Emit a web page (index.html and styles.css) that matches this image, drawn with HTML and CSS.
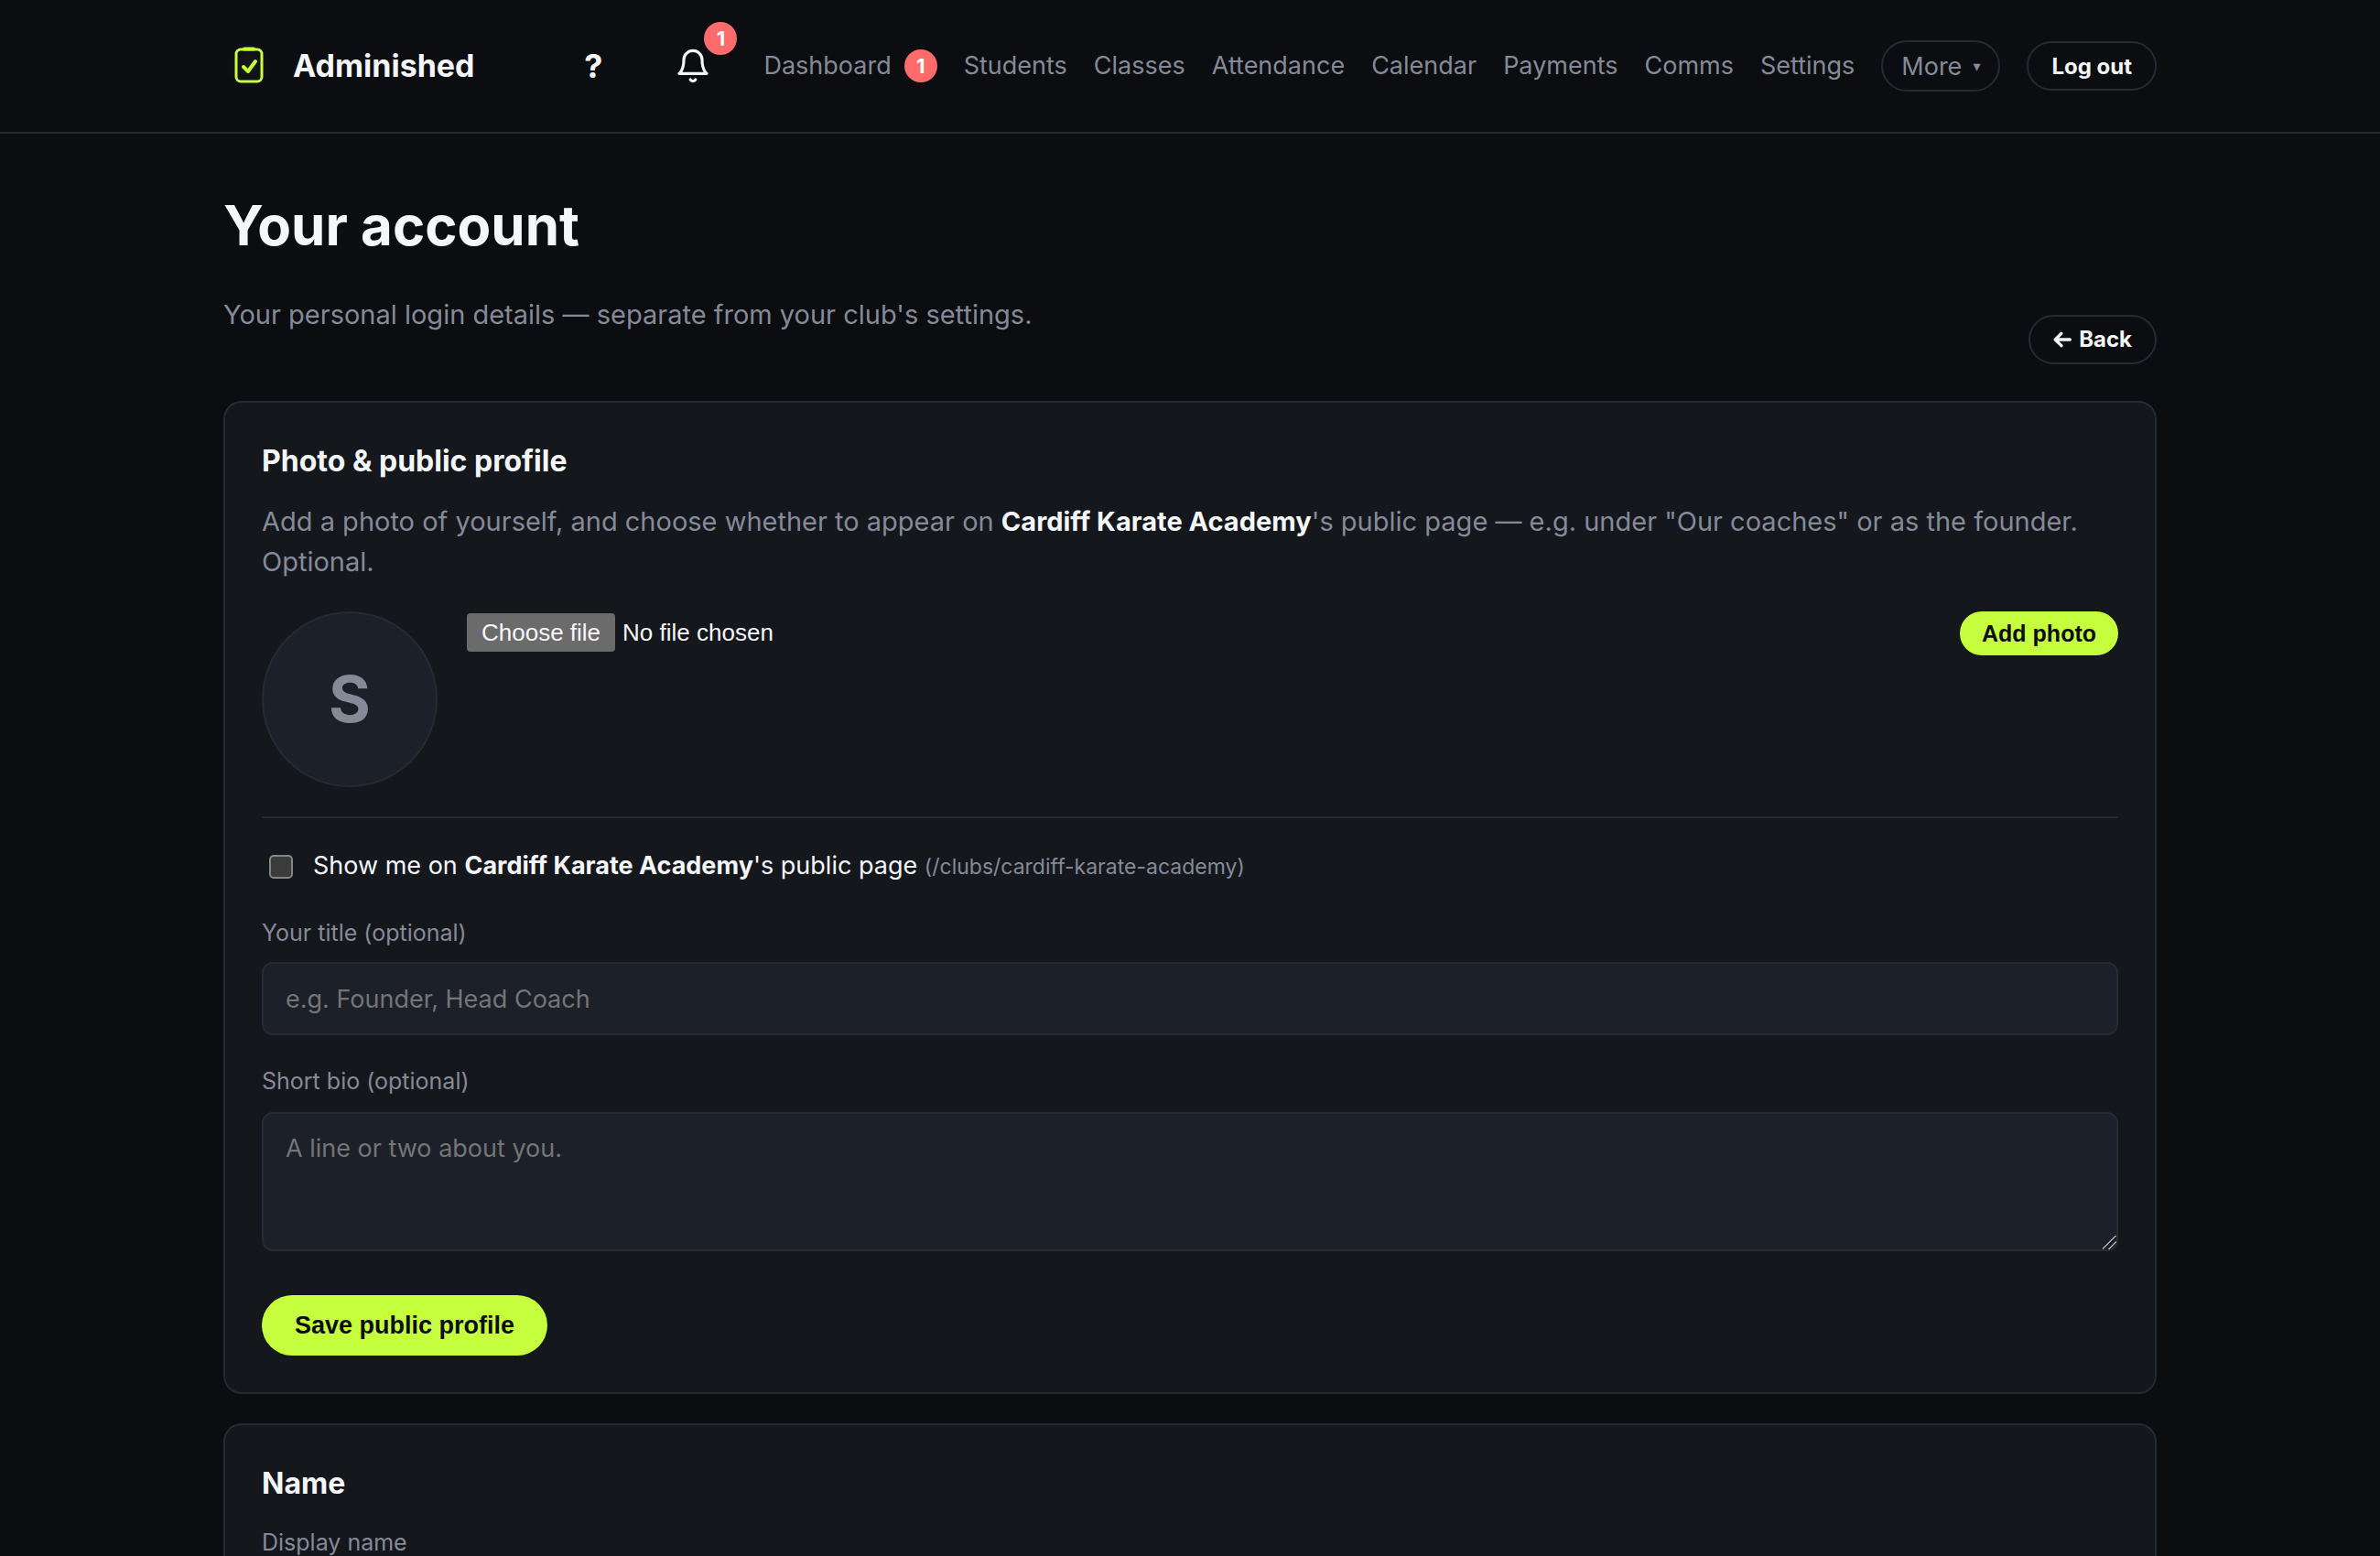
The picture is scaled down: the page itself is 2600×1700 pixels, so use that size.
FILE: index.html
```html
<!DOCTYPE html>
<html lang="en">
<head>
  <meta charset="UTF-8">
  <meta name="viewport" content="width=device-width, initial-scale=1">
  <title>Your account - Adminished</title>
  <link rel="stylesheet" href="styles.css">
</head>
<body>
  <header class="site-header">
    <div class="container header-inner">
      <a href="#" class="brand">
        <svg class="brand-mark" viewBox="0 0 56 56" fill="none" stroke="currentColor" stroke-width="3" stroke-linecap="round" stroke-linejoin="round" aria-hidden="true">
          <rect x="14" y="10" width="28" height="35" rx="5"/>
          <path d="M23 9.500h10" stroke-width="4"/>
          <path d="M22 29l5 5 8-11" stroke-width="4"/>
        </svg>
        <span>Adminished</span>
      </a>

      <nav class="nav">
        <button type="button" class="help" aria-label="Help">?</button>
        <button type="button" class="bell" aria-label="Notifications">
          <svg viewBox="0 0 24 24" width="40" height="40" fill="none" stroke="currentColor" stroke-width="1.900" stroke-linecap="round" stroke-linejoin="round" aria-hidden="true">
            <path d="M18 8A6 6 0 0 0 6 8c0 7-3 9-3 9h18s-3-2-3-9"/>
            <path d="M13.730 21a2 2 0 0 1-3.460 0"/>
          </svg>
          <span class="badge bell-badge">1</span>
        </button>
        <a href="#">Dashboard <span class="badge">1</span></a>
        <a href="#">Students</a>
        <a href="#">Classes</a>
        <a href="#">Attendance</a>
        <a href="#">Calendar</a>
        <a href="#">Payments</a>
        <a href="#">Comms</a>
        <a href="#">Settings</a>
        <button type="button" class="more">More <span class="caret">▾</span></button>
        <button type="button" class="btn-ghost">Log out</button>
      </nav>
    </div>
  </header>

  <main class="container">
    <div class="page-head">
      <div>
        <h1>Your account</h1>
        <p class="muted">Your personal login details — separate from your club's settings.</p>
      </div>
      <a href="#" class="btn-ghost">
        <svg class="arrow" viewBox="0 0 18 18" fill="none" stroke="currentColor" stroke-width="3" stroke-linecap="round" stroke-linejoin="round" aria-hidden="true">
          <path d="M16.500 9H2M8 3L2 9l6 6"/>
        </svg>
        Back
      </a>
    </div>

    <section class="card">
      <h2>Photo &amp; public profile</h2>
      <p class="muted">Add a photo of yourself, and choose whether to appear on <strong>Cardiff Karate Academy</strong>'s public page — e.g. under "Our coaches" or as the founder. Optional.</p>

      <form class="photo-row">
        <div class="avatar">S</div>
        <div class="file">
          <label for="photo" class="file-btn">Choose file</label>
          <span>No file chosen</span>
          <input type="file" class="file-input" id="photo">
        </div>
        <button type="submit" class="btn btn-small">Add photo</button>
      </form>

      <form class="profile-form">
        <label class="check">
          <input type="checkbox">
          <span>Show me on <strong>Cardiff Karate Academy</strong>'s public page <small>(/clubs/cardiff-karate-academy)</small></span>
        </label>

        <label class="field-label" for="title">Your title (optional)</label>
        <input type="text" class="field" id="title" placeholder="e.g. Founder, Head Coach">

        <label class="field-label" for="bio">Short bio (optional)</label>
        <textarea class="field" id="bio" placeholder="A line or two about you."></textarea>

        <button type="submit" class="btn">Save public profile</button>
      </form>
    </section>

    <section class="card">
      <h2>Name</h2>
      <label class="field-label" for="name">Display name</label>
      <input type="text" class="field" id="name">
    </section>
  </main>
</body>
</html>
```
FILE: styles.css
```css
:root {
  --bg: #0b0d10;
  --card: #14171c;
  --field: #1c2029;
  --line: #262a33;
  --text: #f5f6fa;
  --muted: #858a98;
  --accent: #c6ff3d;
  --red: #ff6b6b;
}

* { box-sizing: border-box; }

body {
  margin: 0;
  background: var(--bg);
  color: var(--text);
  font-family: Inter, "Liberation Sans", sans-serif;
  font-size: 29px;
  line-height: 44px;
}

a { color: inherit; text-decoration: none; }
button { font-family: inherit; cursor: pointer; }

.container {
  max-width: 2200px;
  margin: 0 auto;
  padding: 0 44px;
}

/* header */
.site-header { border-bottom: 2px solid var(--line); }

.header-inner {
  display: flex;
  align-items: center;
  justify-content: space-between;
  min-height: 144px;
}

.brand {
  display: flex;
  align-items: center;
  gap: 20px;
  font-size: 34px;
  font-weight: 700;
}

.brand-mark {
  width: 56px;
  height: 56px;
  color: var(--accent);
  background: radial-gradient(circle, #14191c, var(--bg) 70%);
}

.nav {
  display: flex;
  align-items: center;
  gap: 29px;
  font-size: 27px;
  color: var(--muted);
}

.nav a { display: flex; align-items: center; gap: 14px; }

.help, .bell {
  background: none;
  border: none;
  padding: 0;
  color: var(--text);
}

.help { width: 64px; font-size: 36px; font-weight: 700; }
.bell { position: relative; width: 96px; height: 96px; display: flex; align-items: center; justify-content: center; }

.badge {
  display: inline-block;
  min-width: 36px;
  height: 36px;
  border-radius: 18px;
  background: var(--red);
  color: #fff;
  font-size: 22px;
  font-weight: 700;
  line-height: 36px;
  text-align: center;
}

.bell-badge { position: absolute; top: 0; right: 0; }

.more {
  display: flex;
  align-items: center;
  gap: 12px;
  height: 56px;
  padding: 0 20px;
  background: none;
  border: 2px solid var(--line);
  border-radius: 28px;
  color: inherit;
  font-size: 27px;
}

.caret { font-size: 16px; font-family: "DejaVu Sans", sans-serif; }

.btn-ghost {
  display: inline-flex;
  align-items: center;
  gap: 8px;
  height: 54px;
  padding: 0 25px;
  background: none;
  border: 2px solid var(--line);
  border-radius: 27px;
  color: var(--text);
  font-size: 24px;
  font-weight: 700;
}

.arrow { width: 20px; height: 20px; }

/* page */
.page-head {
  display: flex;
  align-items: flex-end;
  justify-content: space-between;
  padding: 62px 0 40px;
}

h1 { margin: 0 0 38px; font-size: 60px; line-height: 76px; }
h2 { margin: 0 0 20px; font-size: 32px; line-height: 48px; }
p { margin: 0; }
.muted { color: var(--muted); }
.muted strong { color: var(--text); }
.page-head p { margin-bottom: 32px; }

.card {
  margin-bottom: 32px;
  padding: 40px;
  background: var(--card);
  border: 2px solid var(--line);
  border-radius: 20px;
}

.photo-row {
  display: flex;
  align-items: flex-start;
  gap: 32px;
  margin-top: 32px;
  padding-bottom: 32px;
  border-bottom: 2px solid var(--line);
}

.avatar {
  width: 192px;
  height: 192px;
  border: 2px solid var(--line);
  border-radius: 50%;
  background: var(--field);
  color: var(--muted);
  font-size: 70px;
  font-weight: 700;
  line-height: 188px;
  text-align: center;
}

.file {
  position: relative;
  display: flex;
  gap: 8px;
  flex: 1;
  margin-top: 2px;
  font-family: "Liberation Sans", Arial, sans-serif;
  font-size: 26px;
  line-height: 42px;
}

.file-btn {
  padding: 0 16px;
  border-radius: 4px;
  background: #6b6b6b;
}

/* real file input lies over the styled button */
.file-input {
  position: absolute;
  inset: 0;
  width: 100%;
  opacity: 0;
  cursor: pointer;
}

.btn {
  height: 66px;
  padding: 0 36px;
  border: none;
  border-radius: 33px;
  background: var(--accent);
  color: var(--bg);
  font-family: "Liberation Sans", Arial, sans-serif;
  font-size: 27px;
  font-weight: 700;
}

.btn-small { height: 48px; padding: 0 24px; font-size: 25px; }

.check {
  display: flex;
  align-items: center;
  gap: 22px;
  margin: 30px 0;
  padding-left: 8px;
  font-size: 27px;
}

.check input {
  appearance: none;
  width: 26px;
  height: 26px;
  margin: 0;
  border: 2px solid #858585;
  border-radius: 5px;
  background: #3b3b3b;
}

.check small { color: var(--muted); font-size: 23px; }

.field-label {
  display: block;
  margin-bottom: 12px;
  color: var(--muted);
  font-size: 25px;
  line-height: 40px;
}

.field {
  display: block;
  width: 100%;
  height: 80px;
  margin-bottom: 30px;
  padding: 0 24px;
  border: 2px solid var(--line);
  border-radius: 12px;
  background: var(--field);
  color: var(--text);
  font-family: inherit;
  font-size: 27px;
}

.field::placeholder { color: #757575; }

textarea.field {
  height: 152px;
  margin-top: 14px;
  margin-bottom: 48px;
  padding: 18px 24px;
  line-height: 40px;
  resize: vertical;
}

textarea.field::-webkit-scrollbar { width: 16px; height: 16px; }

textarea.field::-webkit-resizer {
  background: linear-gradient(135deg, transparent 44%, #a8a8a8 44% 51%, transparent 51% 69%, #a8a8a8 69% 76%, transparent 76%);
}
```
